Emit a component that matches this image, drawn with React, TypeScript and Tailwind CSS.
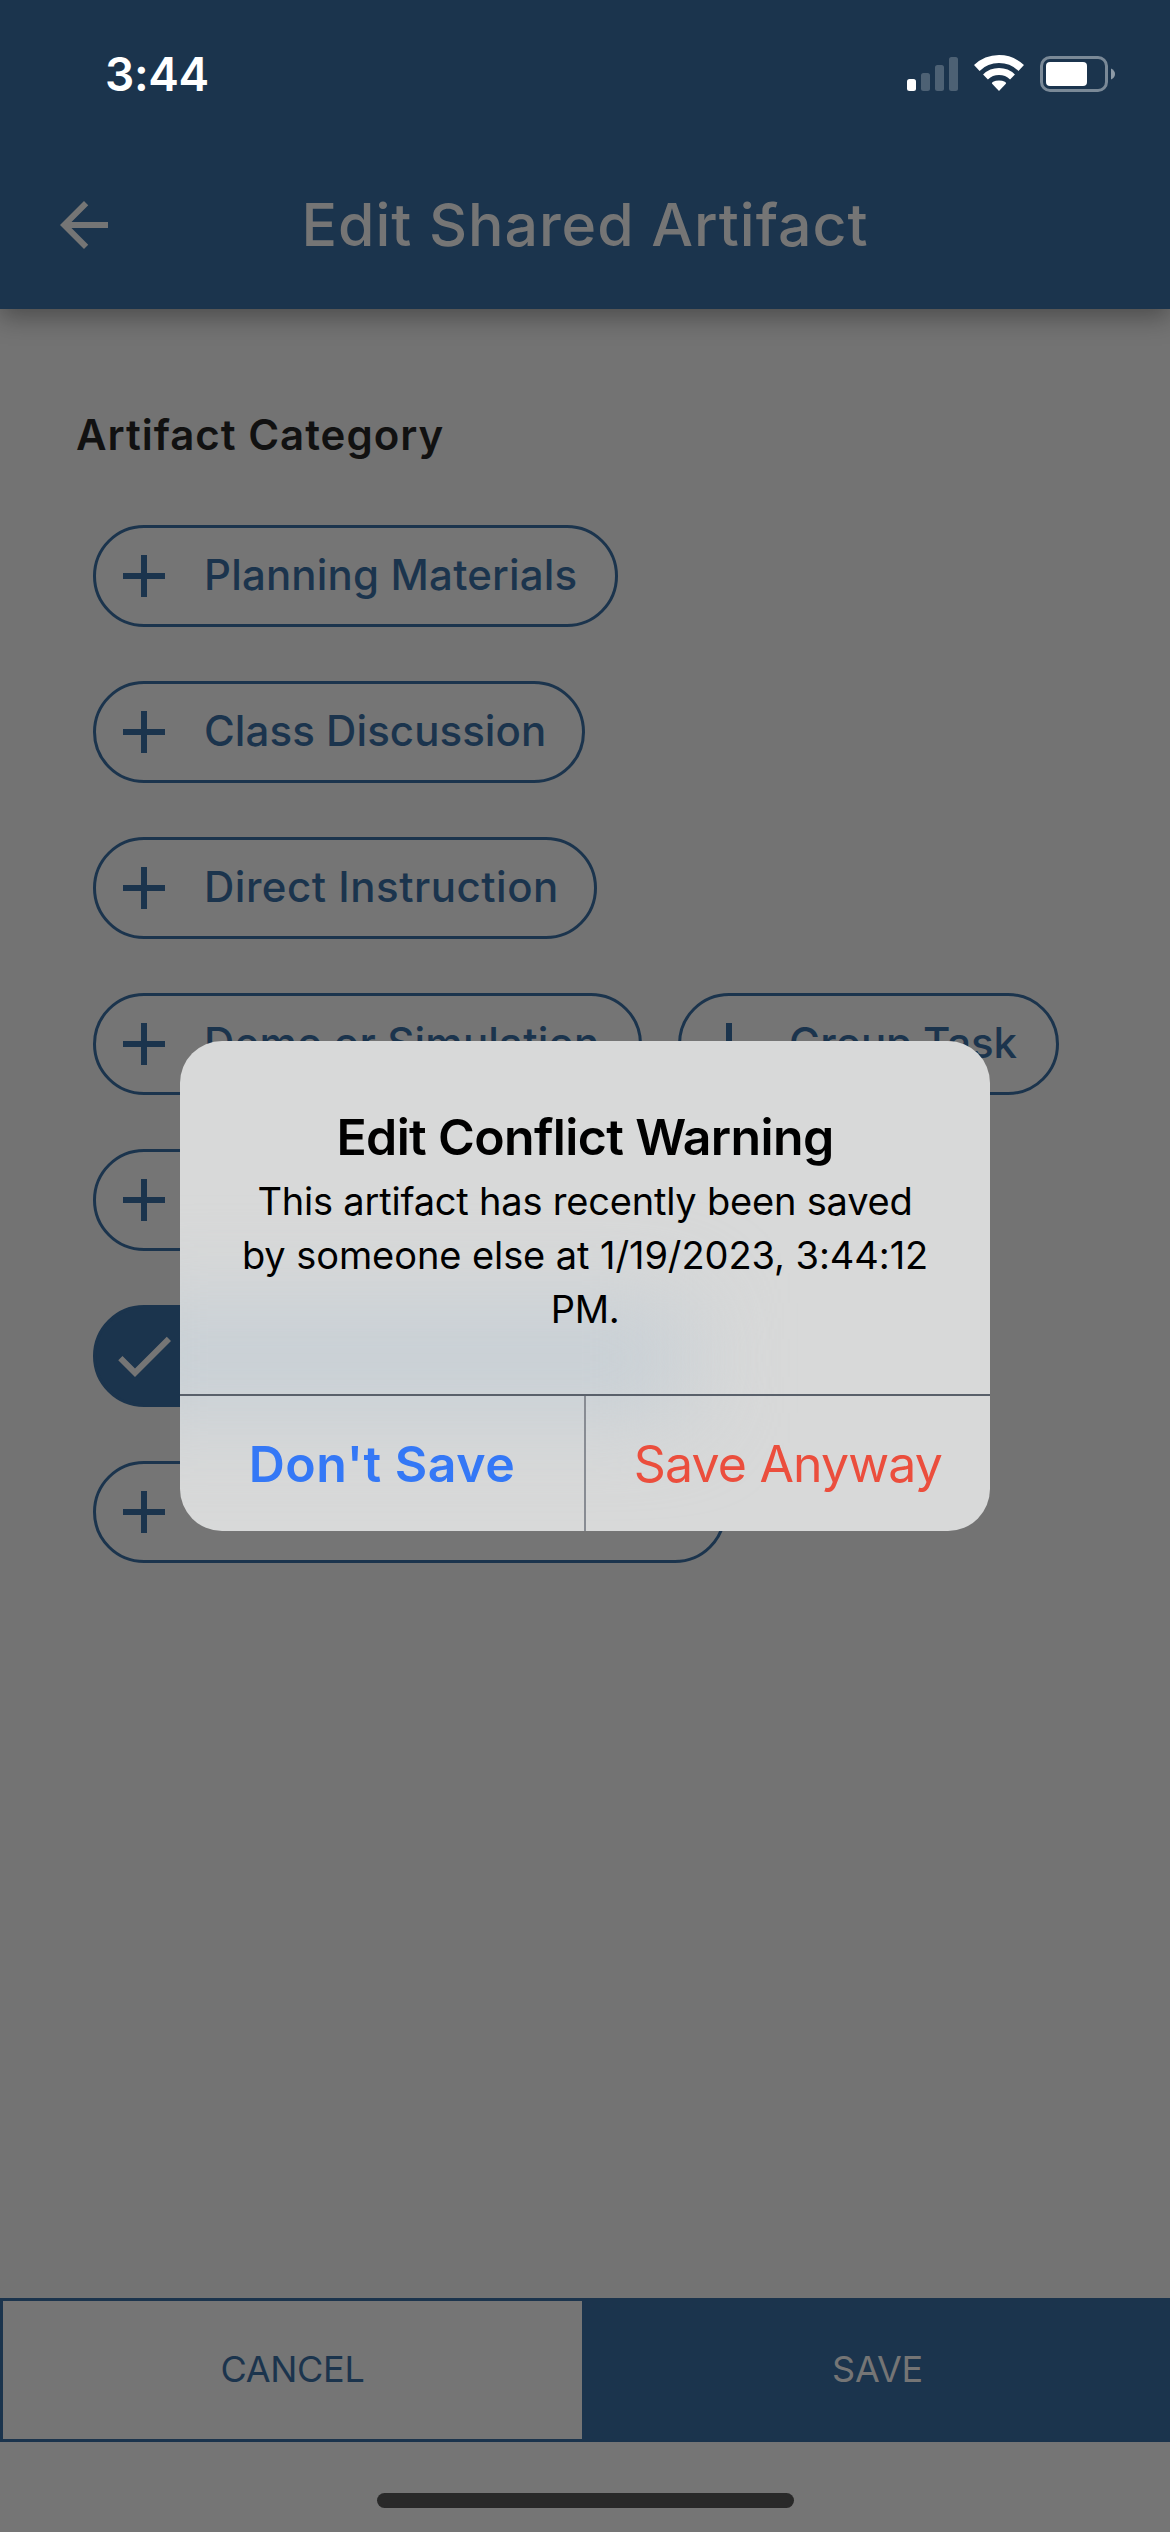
import React from "react";

type Chip = { label: string; width: string; tracking?: string; selected?: boolean };

const chipRows: Chip[][] = [
  [{ label: "Planning Materials", width: "w-[525px]", tracking: "tracking-[0.18px]" }],
  [{ label: "Class Discussion", width: "w-[492px]", tracking: "tracking-[0.07px]" }],
  [{ label: "Direct Instruction", width: "w-[504px]", tracking: "tracking-[0.51px]" }],
  [
    { label: "Demo or Simulation", width: "w-[549px]", tracking: "tracking-[0.2px]" },
    { label: "Group Task", width: "w-[381px]", tracking: "tracking-[-0.1px]" },
  ],
  [{ label: "", width: "w-[420px]" }],
  [{ label: "", width: "w-[610px]", selected: true }],
  [{ label: "", width: "w-[633px]" }],
];

function PlusIcon() {
  return (
    <svg viewBox="0 0 24 24" className="size-[72px] shrink-0" fill="currentColor">
      <path d="M19 13h-6v6h-2v-6H5v-2h6V5h2v6h6v2z" />
    </svg>
  );
}

function CheckIcon() {
  return (
    <svg viewBox="0 0 24 24" className="size-[72px] shrink-0" fill="currentColor">
      <path d="M9 16.17 4.83 12l-1.42 1.41L9 19 21 7l-1.41-1.41z" />
    </svg>
  );
}

function CategoryChip({ label, width, tracking = "", selected }: Chip) {
  const tone = selected ? "bg-[#1b344d] text-[#757575]" : "bg-[#757575] text-[#1b344d]";
  return (
    <button
      className={`flex h-[102px] items-center gap-6 whitespace-nowrap rounded-full border-[3px] border-[#1b344d] pl-3 text-[42px] font-medium leading-[50px] ${width} ${tone}`}
    >
      {selected ? <CheckIcon /> : <PlusIcon />}
      <span className={`mb-0.5 ${tracking}`}>{label}</span>
    </button>
  );
}

function StatusBar() {
  return (
    <div className="flex h-[141px] items-center justify-between pl-[105px] pr-[54px] pt-1.5 text-white">
      <span className="text-[46px] font-semibold leading-none tracking-[-0.36px]">3:44</span>
      <svg className="mb-px" width="209" height="38" viewBox="907 54 209 38" fill="white">
        <rect x="907" y="79" width="9" height="12" rx="2.5" />
        <g opacity="0.22">
          <rect x="921" y="73" width="9" height="18" rx="2.5" />
          <rect x="935" y="65" width="9" height="26" rx="2.5" />
          <rect x="949" y="57" width="9" height="34" rx="2.5" />
        </g>
        <g fill="none" stroke="white">
          <path d="M976.8 68 A32 32 0 0 1 1021.2 68" strokeWidth="8" />
          <path d="M985.5 77 A19.5 19.5 0 0 1 1012.5 77" strokeWidth="7" />
        </g>
        <path d="M999 91 L991.9 83.6 Q992 80.8 999 80.5 Q1006 80.8 1006.1 83.6 Z" />
        <rect x="1041.5" y="57.5" width="65" height="33" rx="8.5" fill="none" stroke="white" strokeWidth="3" opacity="0.42" />
        <rect x="1046" y="62" width="41" height="24" rx="4" />
        <path d="M1111 68.5 Q1115 70.5 1115 74 Q1115 77.5 1111 79.5 Z" opacity="0.5" />
      </svg>
    </div>
  );
}

function Header() {
  return (
    <header className="z-10 bg-[#1b344d] shadow-[0_8px_24px_rgba(0,0,0,0.34)]">
      <StatusBar />
      <div className="grid h-[168px] grid-cols-[120px_1fr_120px] items-center text-[#757575]">
        <svg viewBox="0 0 24 24" className="ml-12 size-[72px]" fill="currentColor">
          <path d="M20 11H7.83l5.59-5.59L12 4l-8 8 8 8 1.41-1.41L7.83 13H20v-2z" />
        </svg>
        <h1 className="text-center text-[59px] font-medium leading-[72px] tracking-[0.95px]">
          Edit Shared Artifact
        </h1>
      </div>
    </header>
  );
}

function ConflictDialog() {
  return (
    <div className="absolute inset-0 z-20 flex items-start justify-center pt-[1041px]">
      <div
        role="alertdialog"
        className="relative isolate flex h-[489.5px] w-[810px] flex-col overflow-hidden rounded-[42px] bg-[#d8d9d9] text-center text-black"
      >
        <div className="absolute -left-20 top-[262px] -z-10 h-[110px] w-[590px] bg-[#c7cfd5] blur-[45px]" />
        <div className="h-[353px] pt-[66px]">
          <h2 className="text-[50px] font-semibold leading-[60px] tracking-[-0.64px]">
            Edit Conflict Warning
          </h2>
          <p className="mt-[7px] whitespace-nowrap text-[38px] leading-[54px]">
            <span className="block tracking-[-0.2px]">This artifact has recently been saved</span>
            <span className="block tracking-[-0.08px]">by someone else at 1/19/2023, 3:44:12</span>
            <span className="block tracking-[-0.3px]">PM.</span>
          </p>
        </div>
        <div className="h-0.5 bg-[#59606a]" />
        <div className="grid grow grid-cols-[404px_2px_404px] text-[50px] leading-[60px]">
          <button className="pt-px font-semibold tracking-[0.52px] text-[#3478f6]">Don't Save</button>
          <div className="bg-[#888c93]" />
          <button className="pt-px tracking-[-0.84px] text-[#eb4e3d]">Save Anyway</button>
        </div>
      </div>
    </div>
  );
}

export default function App() {
  return (
    <div className="relative flex h-[2532px] w-[1170px] flex-col overflow-hidden bg-[#737373] font-['Inter',sans-serif]">
      <Header />
      <main className="grow pl-[93px] pt-[101px]">
        <h2 className="-ml-[17px] text-[42px] font-semibold leading-[50px] tracking-[0.98px] text-[#111111]">
          Artifact Category
        </h2>
        <div className="mt-[65px] flex flex-col gap-[54px]">
          {chipRows.map((row, i) => (
            <div key={i} className="flex gap-9">
              {row.map((chip, j) => (
                <CategoryChip key={j} {...chip} />
              ))}
            </div>
          ))}
        </div>
      </main>
      <footer className="bg-[#757575]">
        <div className="grid h-36 grid-cols-2 text-[36px] leading-[44px]">
          <button className="border-[3px] border-[#1b344d] pb-0.5 tracking-[-0.3px] text-[#1b344d]">CANCEL</button>
          <button className="bg-[#1b344d] pb-0.5 tracking-[-0.27px] text-[#757575]">SAVE</button>
        </div>
        <div className="flex h-[90px] justify-center pt-[51px]">
          <div className="h-[15px] w-[417px] rounded-full bg-[#292929]" />
        </div>
      </footer>
      <ConflictDialog />
    </div>
  );
}
